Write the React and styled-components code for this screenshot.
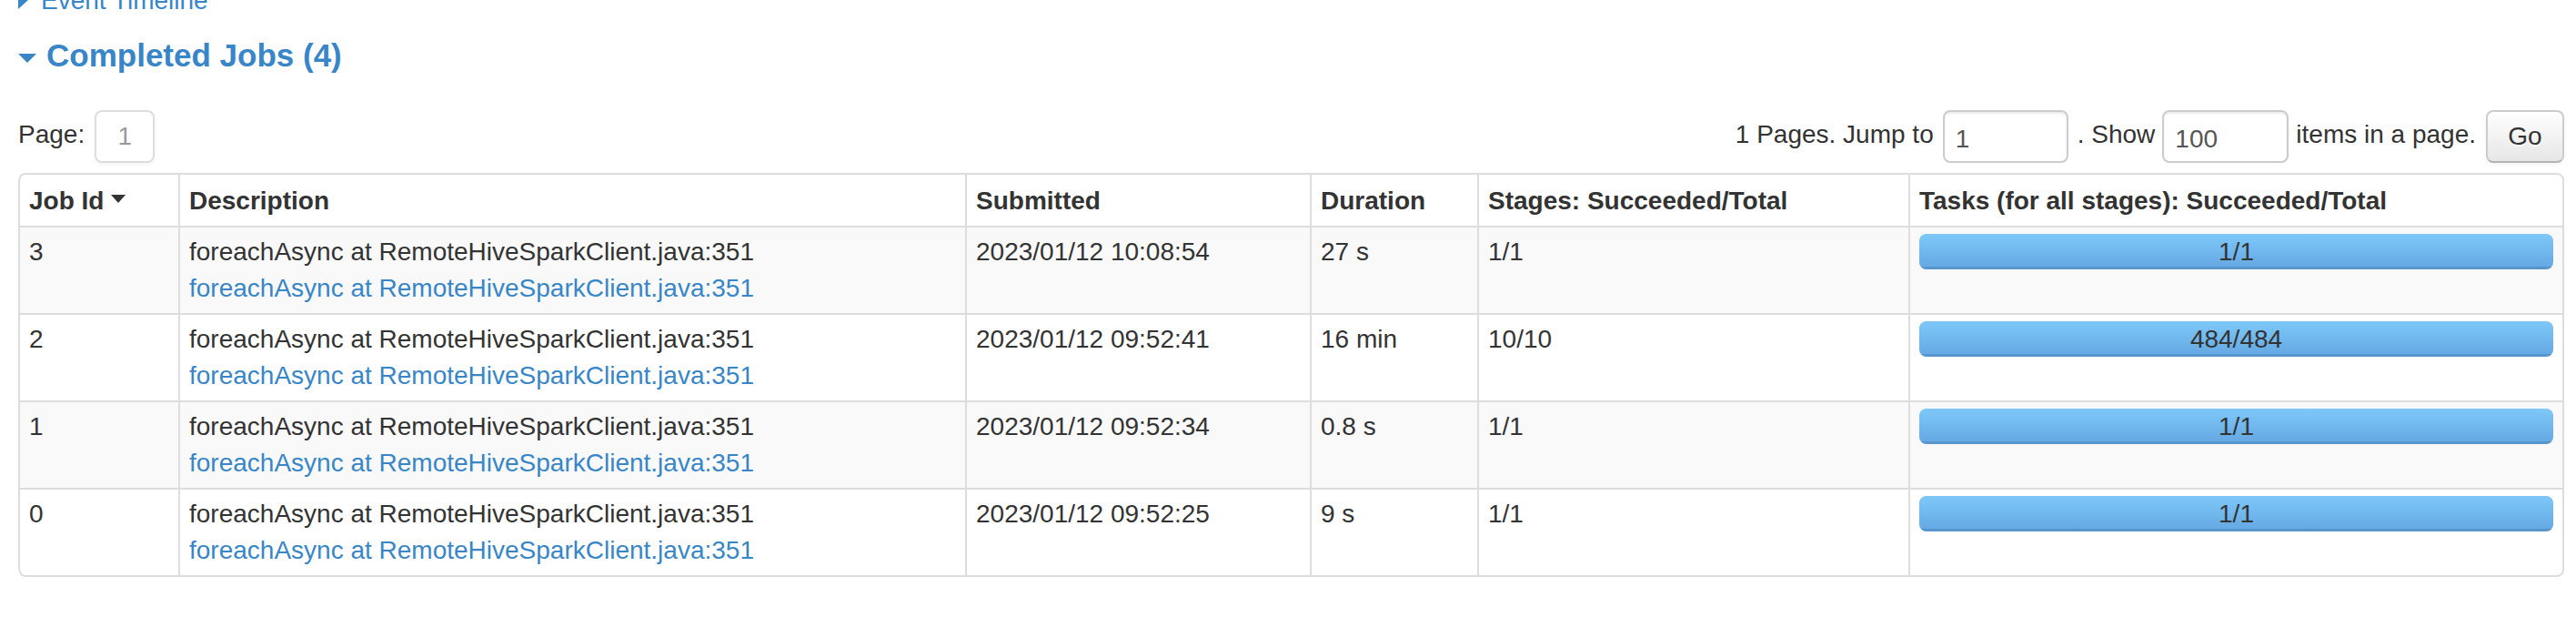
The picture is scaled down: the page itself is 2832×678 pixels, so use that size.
import React from "react";
import styled, { createGlobalStyle } from "styled-components";

const GlobalStyle = createGlobalStyle`
  html, body { margin: 0; padding: 0; background: #fff; }
  body {
    font-family: "Liberation Sans", Arial, Helvetica, sans-serif;
    font-size: 28px;
    line-height: 40px;
    color: #333;
  }
`;

const LINK = "#3886c7";

const Page = styled.div`
  margin-top: -19px;
  padding: 0 13px 0 20px;
`;

const ExpandRow = styled.div`
  height: 40px;
  line-height: 40px;
  color: ${LINK};
`;

const ArrowClosed = styled.span`
  display: inline-block;
  width: 0;
  height: 0;
  border-top: 10px solid transparent;
  border-bottom: 10px solid transparent;
  border-left: 11px solid ${LINK};
  margin-right: 14px;
`;

const ArrowOpen = styled.span`
  display: inline-block;
  width: 0;
  height: 0;
  border-left: 10px solid transparent;
  border-right: 10px solid transparent;
  border-top: 10px solid ${LINK};
  margin-bottom: 4px;
  margin-right: 11px;
`;

const SectionTitle = styled.h4`
  margin: 20px 0;
  font-size: 35px;
  line-height: 40px;
  font-weight: bold;
  color: ${LINK};
`;

const Paging = styled.div`
  display: flex;
  justify-content: space-between;
  align-items: center;
  height: 58px;
  margin-top: 40px;
`;

const PagingGroup = styled.div`
  display: flex;
  align-items: center;
`;

const Label = styled.span`
  white-space: pre;
  margin-right: ${(p) => p.$mr || 0}px;
  position: relative;
  top: -2px;
`;

const PageBox = styled.span`
  display: inline-flex;
  align-items: center;
  justify-content: center;
  width: 66px;
  height: 58px;
  border: 2px solid #ddd;
  border-radius: 8px;
  box-shadow: 0 2px 4px rgba(0, 0, 0, 0.05);
  color: #999;
  box-sizing: border-box;
`;

const TextInput = styled.input`
  box-sizing: border-box;
  width: ${(p) => p.$w}px;
  height: 58px;
  margin-right: ${(p) => p.$mr || 0}px;
  padding: 6px 12px 0;
  border: 2px solid #ccc;
  border-radius: 8px;
  box-shadow: inset 0 2px 2px rgba(0, 0, 0, 0.075);
  font-family: "Liberation Sans", Arial, sans-serif;
  font-size: 28px;
  line-height: 40px;
  color: #555;
  background: #fff;
  outline: none;
`;

const GoButton = styled.button`
  box-sizing: border-box;
  width: 86px;
  height: 58px;
  padding: 0;
  border: 2px solid #ccc;
  border-bottom-color: #b3b3b3;
  border-radius: 8px;
  background-image: linear-gradient(to bottom, #ffffff, #e6e6e6);
  box-shadow: inset 0 2px 0 rgba(255, 255, 255, 0.2), 0 2px 4px rgba(0, 0, 0, 0.05);
  font-family: "Liberation Sans", Arial, sans-serif;
  font-size: 28px;
  line-height: 40px;
  color: #333;
  text-shadow: 0 2px 2px rgba(255, 255, 255, 0.75);
`;

const Table = styled.table`
  width: 100%;
  margin-top: 11px;
  table-layout: fixed;
  border-collapse: separate;
  border-spacing: 0;
  border: 2px solid #ddd;
  border-left: 0;
  border-radius: 8px;
`;

const HeadCell = styled.th`
  box-sizing: border-box;
  width: ${(p) => (p.$w ? `${p.$w}px` : "auto")};
  padding: 9px 10px 7px;
  border-left: 2px solid #ddd;
  text-align: left;
  vertical-align: bottom;
  font-weight: bold;
  line-height: 40px;
  white-space: nowrap;
  &:first-child { border-top-left-radius: 8px; }
  &:last-child { border-top-right-radius: 8px; }
`;

const SortArrow = styled.span`
  display: inline-block;
  width: 0;
  height: 0;
  margin-left: 8px;
  border-left: 8px solid transparent;
  border-right: 8px solid transparent;
  border-top: 9px solid #333;
  vertical-align: 7px;
`;

const Row = styled.tr`
  &:nth-child(odd) > td { background: #f9f9f9; }
  &:last-child > td:first-child { border-bottom-left-radius: 8px; }
  &:last-child > td:last-child { border-bottom-right-radius: 8px; }
`;

const Cell = styled.td`
  padding: 7px 10px;
  border-left: 2px solid #ddd;
  border-top: 2px solid #ddd;
  vertical-align: top;
  line-height: 40px;
  white-space: nowrap;
`;

const DescLink = styled.a`
  display: block;
  color: ${LINK};
  text-decoration: none;
`;

const Progress = styled.div`
  position: relative;
  height: 39px;
  border-radius: 8px;
  overflow: hidden;
  background-image: linear-gradient(to bottom, #f5f5f5, #f9f9f9);
  box-shadow: inset 0 2px 4px rgba(0, 0, 0, 0.1);
`;

const Bar = styled.div`
  height: 100%;
  background-image: linear-gradient(to bottom, #7dc8f9, #63a7e1);
  box-shadow: inset 0 -3px 0 rgba(40, 80, 130, 0.22);
`;

const BarLabel = styled.span`
  position: absolute;
  left: 0;
  top: 0;
  width: 100%;
  text-align: center;
  line-height: 39px;
  color: #333;
`;

const DESC = "foreachAsync at RemoteHiveSparkClient.java:351";

const jobs = [
  { id: 3, submitted: "2023/01/12 10:08:54", duration: "27 s", stages: [1, 1], tasks: [1, 1] },
  { id: 2, submitted: "2023/01/12 09:52:41", duration: "16 min", stages: [10, 10], tasks: [484, 484] },
  { id: 1, submitted: "2023/01/12 09:52:34", duration: "0.8 s", stages: [1, 1], tasks: [1, 1] },
  { id: 0, submitted: "2023/01/12 09:52:25", duration: "9 s", stages: [1, 1], tasks: [1, 1] },
];

const columns = [
  { label: "Job Id", w: 176, sort: true },
  { label: "Description", w: 865 },
  { label: "Submitted", w: 379 },
  { label: "Duration", w: 184 },
  { label: "Stages: Succeeded/Total", w: 474 },
  { label: "Tasks (for all stages): Succeeded/Total" },
];

export default function App() {
  return (
    <>
      <GlobalStyle />
      <Page>
        <ExpandRow>
          <ArrowClosed />
          <span>Event Timeline</span>
        </ExpandRow>
        <SectionTitle>
          <ArrowOpen />
          <span>Completed Jobs (4)</span>
        </SectionTitle>
        <Paging>
          <PagingGroup>
            <Label $mr={11}>Page:</Label>
            <PageBox>1</PageBox>
          </PagingGroup>
          <PagingGroup>
            <Label $mr={10}>1 Pages. Jump to</Label>
            <TextInput $w={138} $mr={10} defaultValue="1" />
            <Label $mr={8}>. Show</Label>
            <TextInput $w={139} $mr={8} defaultValue="100" />
            <Label $mr={11}>items in a page.</Label>
            <GoButton>Go</GoButton>
          </PagingGroup>
        </Paging>
        <Table>
          <thead>
            <tr>
              {columns.map((c) => (
                <HeadCell key={c.label} $w={c.w}>
                  {c.label}
                  {c.sort && <SortArrow />}
                </HeadCell>
              ))}
            </tr>
          </thead>
          <tbody>
            {jobs.map((j) => (
              <Row key={j.id}>
                <Cell>{j.id}</Cell>
                <Cell>
                  <div>{DESC}</div>
                  <DescLink href="#">{DESC}</DescLink>
                </Cell>
                <Cell>{j.submitted}</Cell>
                <Cell>{j.duration}</Cell>
                <Cell>{`${j.stages[0]}/${j.stages[1]}`}</Cell>
                <Cell>
                  <Progress>
                    <BarLabel>{`${j.tasks[0]}/${j.tasks[1]}`}</BarLabel>
                    <Bar style={{ width: `${(j.tasks[0] / j.tasks[1]) * 100}%` }} />
                  </Progress>
                </Cell>
              </Row>
            ))}
          </tbody>
        </Table>
      </Page>
    </>
  );
}
